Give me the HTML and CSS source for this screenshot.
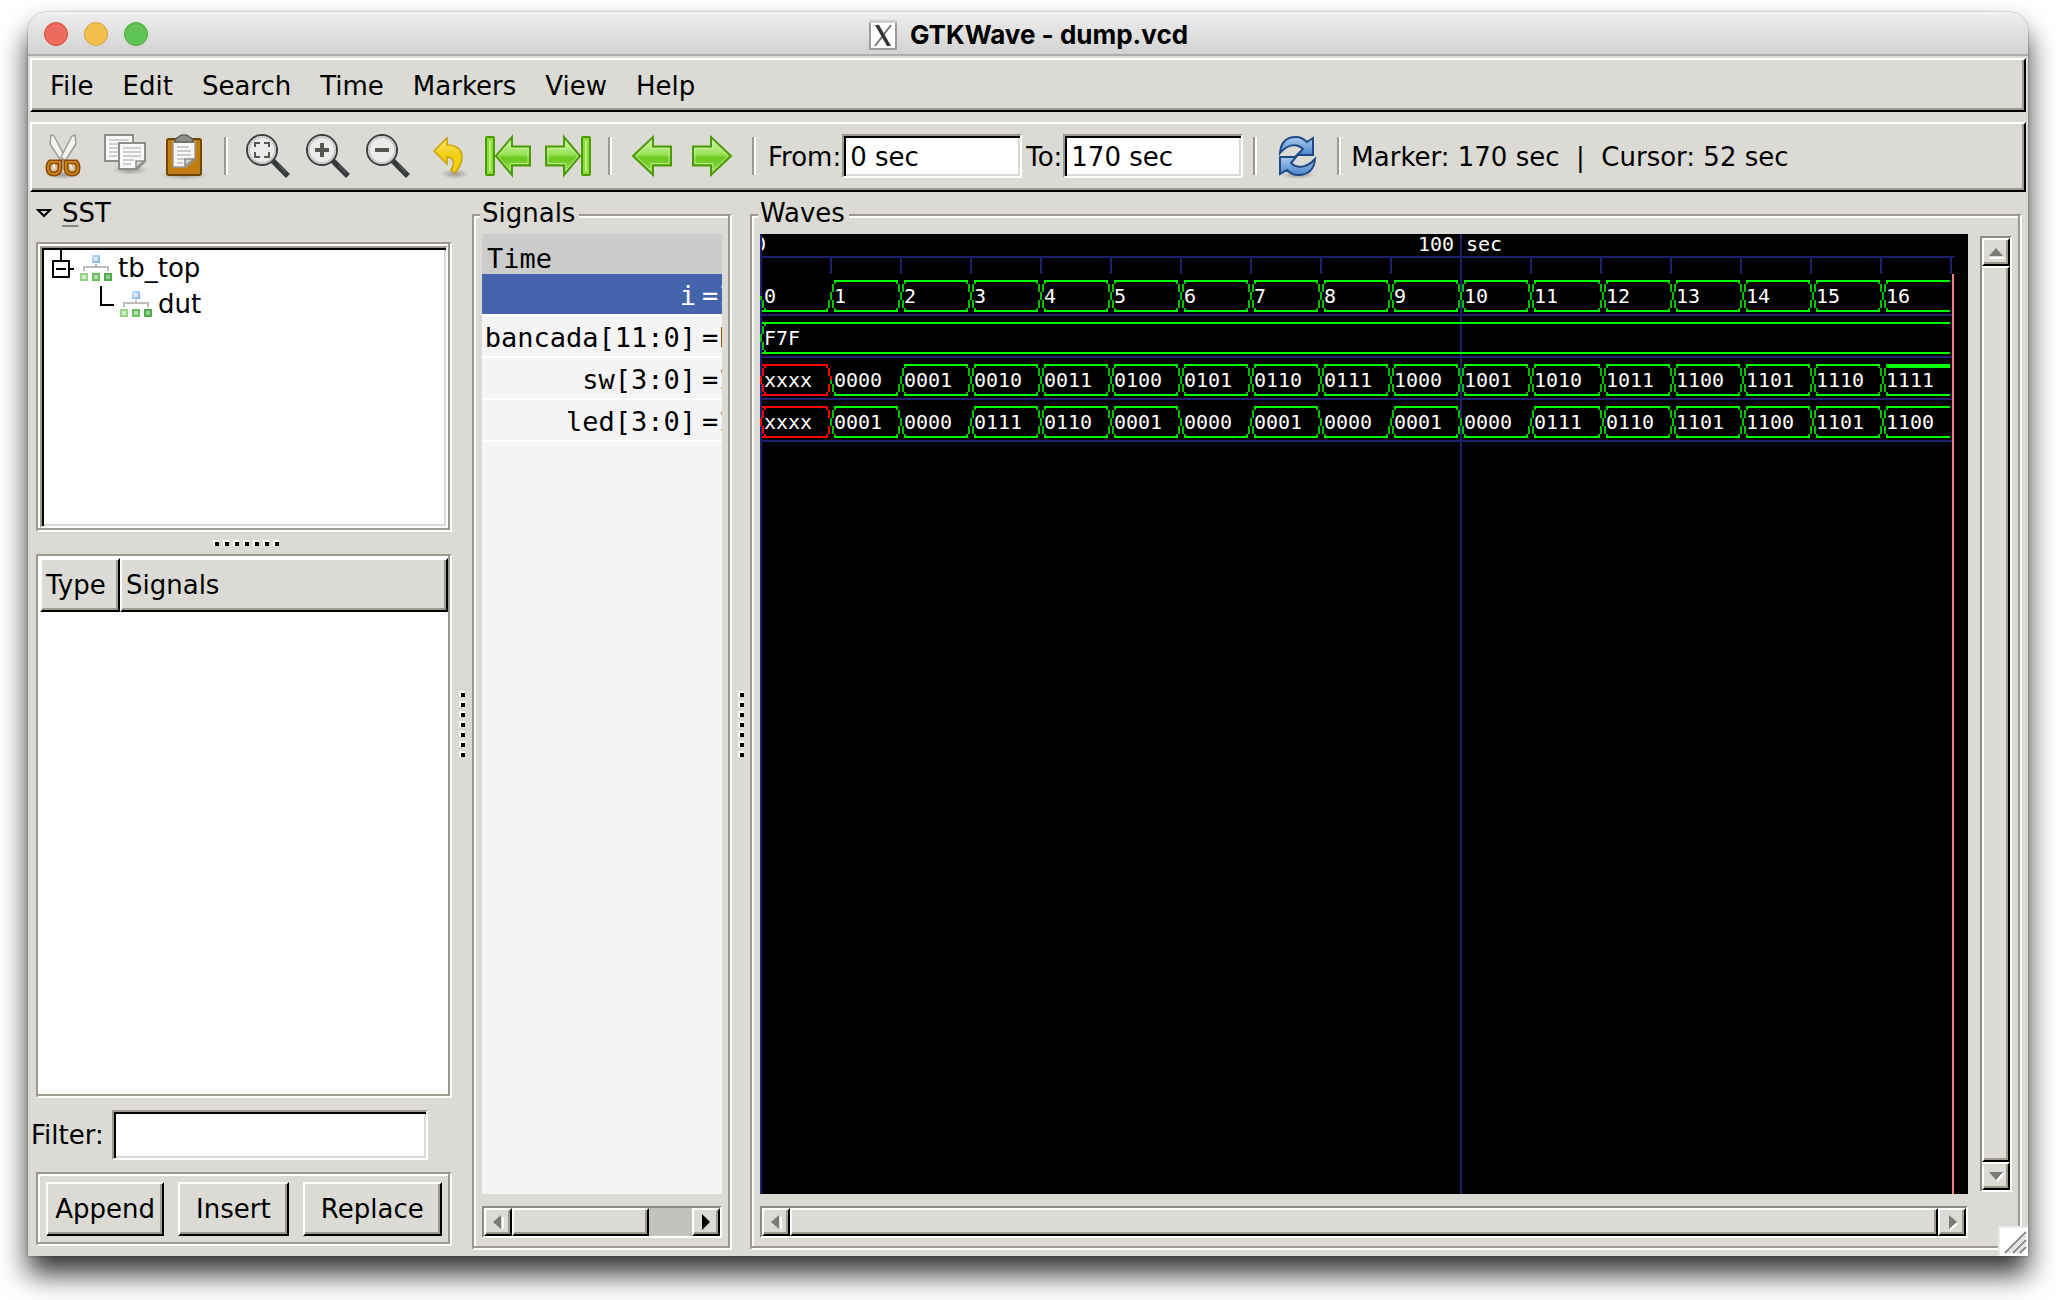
FILE: index.html
```html
<!DOCTYPE html>
<html lang="en">
<head>
<meta charset="utf-8">
<title>GTKWave - dump.vcd</title>
<link rel="stylesheet" href="styles.css">
</head>
<body>
<svg class="defs" aria-hidden="true">
  <defs>
    <linearGradient id="green" x1="0" y1="0" x2="0" y2="1">
      <stop offset="0" stop-color="#d6f7b4"/><stop offset=".45" stop-color="#9be35a"/><stop offset=".55" stop-color="#6cc820"/><stop offset="1" stop-color="#8fdc4c"/>
    </linearGradient>
    <linearGradient id="gold" x1="0" y1="0" x2="0" y2="1">
      <stop offset="0" stop-color="#fbe56a"/><stop offset=".5" stop-color="#f2cf15"/><stop offset="1" stop-color="#eed011"/>
    </linearGradient>
    <linearGradient id="blue" x1="0" y1="0" x2="0" y2="1">
      <stop offset="0" stop-color="#a9caf0"/><stop offset="1" stop-color="#4a86cc"/>
    </linearGradient>
    <radialGradient id="shade">
      <stop offset="0" stop-color="#000" stop-opacity=".3"/><stop offset="1" stop-color="#000" stop-opacity="0"/>
    </radialGradient>
    <linearGradient id="node" x1="0" y1="0" x2="1" y2="1">
      <stop offset="0" stop-color="#b8dcf8"/><stop offset="1" stop-color="#7fb4ea"/>
    </linearGradient>
    <symbol id="lens" viewBox="0 0 48 48">
      <path d="M30 30l12 12" stroke="#353b3d" stroke-width="5.500" stroke-linecap="square"/>
      <path d="M35 33l7 8" stroke="#6a7072" stroke-width="1"/>
      <circle cx="18" cy="18" r="15" fill="#ebebe9" stroke="#3a4042" stroke-width="2"/>
      <circle cx="18" cy="18" r="13" fill="none" stroke="#c9c9c6" stroke-width="2"/>
    </symbol>
    <symbol id="arrow" viewBox="0 0 48 48">
      <path d="M5 24L25 5v9.500h18v19H25V43z" fill="url(#green)" stroke="#4c9a08" stroke-width="2"/>
      <path d="M8 24L23 9.500v7h18v15H23v7z" fill="none" stroke="#c4f29a" stroke-width="1" opacity=".8"/>
    </symbol>
    <symbol id="edge-arrow" viewBox="0 0 50 48">
      <rect x="3" y="5" width="8" height="38" rx="1" fill="#86dd3c" stroke="#4c9a08" stroke-width="2"/>
      <path d="M7 8v32" stroke="#b5f07c" stroke-width="2"/>
      <path d="M13 24L29 5v9.500h18v19H29V43z" fill="url(#green)" stroke="#4c9a08" stroke-width="2"/>
      <path d="M15 24L27 9.500v7h18v15H27v7z" fill="none" stroke="#c4f29a" stroke-width="1" opacity=".8"/>
    </symbol>
    <symbol id="hierarchy" viewBox="0 0 32 26">
      <path d="M4 16v-4h24v4M16 9v3" fill="none" stroke="#bdbdbd" stroke-width="2"/>
      <rect x="13" y="1" width="6" height="6" fill="#dce6f8" stroke="url(#node)" stroke-width="2"/>
      <rect x="1" y="19" width="6" height="6" fill="#d0eecb" stroke="#93d486" stroke-width="2"/>
      <rect x="13" y="19" width="6" height="6" fill="#b5dfb0" stroke="#6cc05f" stroke-width="2"/>
      <rect x="25" y="19" width="6" height="6" fill="#93cf93" stroke="#4faa4b" stroke-width="2"/>
    </symbol>
  </defs>
</svg>

<div class="window">
  <header class="titlebar">
    <div class="lights">
      <button class="light red" aria-label="Close"></button>
      <button class="light amber" aria-label="Minimize"></button>
      <button class="light lime" aria-label="Zoom"></button>
    </div>
    <svg class="x-icon" viewBox="0 0 30 32" aria-hidden="true">
      <rect x="2" y="2" width="26" height="28" fill="#fff" stroke="#9c9c9c" stroke-width="2"/>
      <path d="M1 1h28v3H1z" fill="#cfcfcf"/>
      <path d="M23 6L7 27" stroke="#777" stroke-width="2"/>
      <path d="M7 6h4l12 21h-4z" fill="#333"/>
    </svg>
    <h1 class="title">GTKWave - dump.vcd</h1>
  </header>

  <nav class="menubar raised">
    <button class="menu">File</button>
    <button class="menu">Edit</button>
    <button class="menu">Search</button>
    <button class="menu">Time</button>
    <button class="menu">Markers</button>
    <button class="menu">View</button>
    <button class="menu">Help</button>
  </nav>

  <div class="toolbar raised">
    <button class="tool" aria-label="Cut"><svg viewBox="0 0 48 48">
      <ellipse cx="23" cy="43" rx="18" ry="4" fill="url(#shade)"/>
      <path d="M11 3L10 12l11 17 4-4L14 4z" fill="#f4f4f2" stroke="#9b9d98" stroke-width="1.500"/>
      <path d="M35 3l1 9-11 17-4-4L32 4z" fill="#f4f4f2" stroke="#9b9d98" stroke-width="1.500"/>
      <path d="M10 30h10v7q-1 5-6 5-6 0-6-6 0-4 2-6zM36 30H26v7q1 5 6 5 6 0 6-6 0-4-2-6z" fill="#d9bf95" stroke="#8a4b00" stroke-width="5"/>
      <path d="M10 30h10v7q-1 5-6 5-6 0-6-6 0-4 2-6zM36 30H26v7q1 5 6 5 6 0 6-6 0-4-2-6z" fill="none" stroke="#cc8018" stroke-width="2"/>
      <path d="M14 32v5M30 32l2 5" stroke="#eee" stroke-width="2"/>
    </svg></button>
    <button class="tool" aria-label="Copy"><svg viewBox="0 0 48 48">
      <ellipse cx="30" cy="38" rx="18" ry="5" fill="url(#shade)"/>
      <path d="M5 3h28v26H5z" fill="#f8f8f7" stroke="#8c8e8a" stroke-width="2"/>
      <path d="M9 8h20M9 12h16M9 16h12M9 20h14M9 24h8" stroke="#c0c1be" stroke-width="1.500"/>
      <path d="M19 11h26v18l-8 8H19z" fill="#f8f8f7" stroke="#8c8e8a" stroke-width="2"/>
      <path d="M23 16h18M23 20h18M23 24h18M23 28h11M23 32h8" stroke="#c0c1be" stroke-width="1.500"/>
      <path d="M36 36v-7h8z" fill="#d8d9d6" stroke="#8c8e8a" stroke-width="1.500"/>
    </svg></button>
    <button class="tool" aria-label="Paste"><svg viewBox="0 0 48 48">
      <ellipse cx="24" cy="43" rx="24" ry="5" fill="url(#shade)"/>
      <rect x="7" y="7" width="34" height="36" rx="2" fill="#c17d11" stroke="#6e4702" stroke-width="2"/>
      <path d="M13 10h22v17l-9 8H13z" fill="#f6f6f5" stroke="#9a9b97" stroke-width="1.500"/>
      <path d="M17 15h12M17 19h14M17 23h14M17 27h9M17 31h6" stroke="#bcbdb9" stroke-width="1.500"/>
      <path d="M25 34v-7h9z" fill="#d2d3cf" stroke="#888a85" stroke-width="1.500"/>
      <path d="M15 10q0-4 4-5 1-2 5-2t5 2q4 1 4 5z" fill="#8d8f89" stroke="#63655f" stroke-width="1.500"/>
    </svg></button>
    <span class="separator"></span>
    <button class="tool" aria-label="Zoom fit"><svg viewBox="0 0 48 48">
      <use href="#lens"/>
      <path d="M11 15v-4h5M20 11h5v4M25 20v5h-5M16 25h-5v-5" fill="none" stroke="#555753" stroke-width="2"/>
    </svg></button>
    <button class="tool" aria-label="Zoom in"><svg viewBox="0 0 48 48">
      <use href="#lens"/><path d="M11 18h14M18 11v14" stroke="#555753" stroke-width="4"/>
    </svg></button>
    <button class="tool" aria-label="Zoom out"><svg viewBox="0 0 48 48">
      <use href="#lens"/><path d="M11 18h14" stroke="#555753" stroke-width="4"/>
    </svg></button>
    <button class="tool" aria-label="Zoom undo"><svg viewBox="0 0 48 48">
      <ellipse cx="31" cy="42" rx="14" ry="5" fill="url(#shade)"/>
      <path d="M10 19L23 6v7c10 0 15 5 15 12 0 6-3 11-7 16l-4-3c4-6 3-13-4-13v7z" fill="url(#gold)" stroke="#c9a202" stroke-width="1.500"/>
    </svg></button>
    <button class="tool" aria-label="Zoom to start"><svg class="wide" viewBox="0 0 50 48"><use href="#edge-arrow"/></svg></button>
    <button class="tool" aria-label="Zoom to end"><svg class="wide flip" viewBox="0 0 50 48"><use href="#edge-arrow"/></svg></button>
    <span class="separator"></span>
    <button class="tool" aria-label="Previous edge"><svg viewBox="0 0 48 48"><use href="#arrow"/></svg></button>
    <button class="tool" aria-label="Next edge"><svg class="flip" viewBox="0 0 48 48"><use href="#arrow"/></svg></button>
    <span class="separator"></span>
    <label class="range" for="from">From:</label>
    <input class="field sunken time" id="from" type="text" value="0 sec">
    <label class="range" for="to">To:</label>
    <input class="field sunken time" id="to" type="text" value="170 sec">
    <span class="separator"></span>
    <button class="tool" aria-label="Reload"><svg viewBox="0 0 48 48">
      <ellipse cx="25" cy="43" rx="17" ry="4" fill="url(#shade)"/>
      <path d="M7 21C8 9 14 5 23 5c5 0 8 2 11 5l6-4v17H24l6-6c-6-6-15-5-23 4z" fill="url(#blue)" stroke="#204a87" stroke-width="2"/>
      <path d="M42 27c-1 12-8 16-17 16-5 0-8-2-11-5l-7 4V25h16l-5 6c6 6 16 5 24-4z" fill="url(#blue)" stroke="#204a87" stroke-width="2"/>
    </svg></button>
    <span class="separator"></span>
    <output class="status">Marker: 170 sec&nbsp; |&nbsp; Cursor: 52 sec</output>
  </div>

  <main class="panes">
    <section class="sst">
      <button class="expander"><svg viewBox="0 0 16 10" aria-hidden="true"><path d="M2 2h12L8 8z" fill="none" stroke="#000" stroke-width="2"/></svg><span><u>S</u>ST</span></button>
      <div class="etched tree-frame">
        <ul class="tree sunken">
          <li class="branch"><svg class="twig" viewBox="0 0 22 36" aria-hidden="true"><path d="M9 0v11M1 11h16v16H1zM4 19h10M17 19h5" fill="none" stroke="#000" stroke-width="2"/></svg><svg class="module" aria-hidden="true"><use href="#hierarchy"/></svg>tb_top</li>
          <li class="branch leaf"><svg class="twig" viewBox="0 0 22 36" aria-hidden="true"><path d="M9 0v19h13" fill="none" stroke="#000" stroke-width="2"/></svg><svg class="module" aria-hidden="true"><use href="#hierarchy"/></svg>dut</li>
        </ul>
      </div>
      <div class="grip across"><i></i><i></i><i></i><i></i><i></i><i></i><i></i></div>
      <div class="etched list-frame">
        <table class="facs">
          <thead><tr><th class="raised type">Type</th><th class="raised">Signals</th></tr></thead>
        </table>
      </div>
      <div class="filter">
        <label for="filter">Filter:</label>
        <input class="field sunken" id="filter" type="text">
      </div>
      <div class="etched actions">
        <button class="action raised append">Append</button>
        <button class="action raised insert">Insert</button>
        <button class="action raised replace">Replace</button>
      </div>
    </section>

    <div class="grip down"><i></i><i></i><i></i><i></i><i></i><i></i><i></i></div>

    <section class="etched group signals">
      <h2 class="legend">Signals</h2>
      <div class="names">
        <div class="time-head">Time</div>
        <div class="name selected"><span>i</span><b>=1</b></div>
        <div class="name"><span>bancada[11:0]</span><b>=F</b></div>
        <div class="name"><span>sw[3:0]</span><b>=1</b></div>
        <div class="name"><span>led[3:0]</span><b>=1</b></div>
      </div>
      <div class="scroll">
        <button class="raised step" aria-label="Scroll left"><svg viewBox="0 0 24 24"><path d="M16 6v14l2-2V8z" fill="#fff"/><path d="M15 5v14l-8-7z" fill="#7a7a78"/></svg></button>
        <div class="raised thumb part"></div>
        <button class="raised step end" aria-label="Scroll right"><svg viewBox="0 0 24 24"><path d="M8 4v16l8-8z"/></svg></button>
      </div>
    </section>

    <div class="grip down"><i></i><i></i><i></i><i></i><i></i><i></i><i></i></div>

    <section class="etched group waves">
      <h2 class="legend">Waves</h2>
      <div class="view">
        <svg class="plot" id="plot" role="img" aria-label="Waveforms"></svg>
        <div class="scroll upright">
          <button class="raised step" aria-label="Scroll up"><svg viewBox="0 0 24 24"><path d="M6 17h14v2H6z" fill="#fff"/><path d="M12 8l7 8H5z" fill="#7a7a78"/></svg></button>
          <div class="raised thumb"></div>
          <button class="raised step" aria-label="Scroll down"><svg viewBox="0 0 24 24"><path d="M7 9h14l-7 9z" fill="#fff"/><path d="M5 8h14l-7 8z" fill="#7a7a78"/></svg></button>
        </div>
      </div>
      <div class="scroll">
        <button class="raised step" aria-label="Scroll left"><svg viewBox="0 0 24 24"><path d="M16 6v14l2-2V8z" fill="#fff"/><path d="M15 5v14l-8-7z" fill="#7a7a78"/></svg></button>
        <div class="raised thumb"></div>
        <button class="raised step" aria-label="Scroll right"><svg viewBox="0 0 24 24"><path d="M10 7v14l8-7z" fill="#fff"/><path d="M9 5v14l8-7z" fill="#7a7a78"/></svg></button>
      </div>
    </section>
  </main>

  <svg class="resizer" viewBox="0 0 30 30" aria-hidden="true">
    <path d="M0 0h30v30H0z" fill="#e9e9e9"/><path d="M2 2h28v28H2z" fill="#fff"/>
    <path d="M7 27L28 6M15 27L28 14M22 27l6-6" stroke="#8a8a8a" stroke-width="2"/>
    <path d="M11 27L28 10M19 27l9-9" stroke="#dcdcdc" stroke-width="2"/>
  </svg>
</div>
<script src="waves.js"></script>
</body>
</html>
```
FILE: styles.css
```css
:root {
  --bg: #dbdad5;
  --dark: #9d998f;
  --grid: #202070;
}

* { box-sizing: border-box; }

html { height: 100%; }

body {
  margin: 0;
  min-height: 100%;
  display: flex;
  padding: 12px 28px 44px;
  background: #fff;
  color: #000;
  font: 26px/30px "DejaVu Sans", sans-serif;
  overflow: hidden;
}

button, input {
  font: inherit;
  color: inherit;
  margin: 0;
  padding: 0;
  border: 0;
  background: none;
  outline: none;
}

svg { display: block; }

.defs { position: absolute; width: 0; height: 0; }

.window {
  position: relative;
  flex: 1;
  min-width: 0;
  display: flex;
  flex-direction: column;
  background: var(--bg);
  border-radius: 20px 20px 0 0;
  box-shadow: 0 18px 28px rgba(0, 0, 0, .8), 0 0 2px rgba(0, 0, 0, .4);
}

/* Bevels */
.raised {
  background: var(--bg);
  border: 2px solid;
  border-color: #fff #000 #000 #fff;
  box-shadow: inset -2px -2px 0 var(--dark);
}

.sunken {
  background: #fff;
  border: 2px solid;
  border-color: var(--dark) #fff #fff var(--dark);
  box-shadow: inset 2px 2px 0 #000, inset -2px -2px 0 var(--bg);
}

.etched {
  border: 2px solid;
  border-color: var(--dark) #fff #fff var(--dark);
  box-shadow: inset -2px -2px 0 var(--dark), inset 2px 2px 0 #fff;
}

/* Title bar */
.titlebar {
  position: relative;
  display: flex;
  align-items: center;
  justify-content: center;
  gap: 12px;
  height: 44px;
  padding-top: 2px;
  background: linear-gradient(#ededed, #d2d2d2);
  border-top: 2px solid #f4f4f4;
  border-bottom: 2px solid #adadad;
  border-radius: 20px 20px 0 0;
}

.lights {
  position: absolute;
  left: 16px;
  top: 8px;
  display: flex;
  gap: 16px;
}

.light { width: 24px; height: 24px; border-radius: 50%; border: 1px solid; }
.red { background: #ec6a5e; border-color: #d5493f; }
.amber { background: #f4bf4f; border-color: #d8a136; }
.lime { background: #61c554; border-color: #4aa73c; }

.x-icon { width: 30px; height: 32px; }

.title {
  margin: 0;
  font: bold 26px/30px Inter, sans-serif;
}

/* Menus and tools */
.menubar {
  display: flex;
  gap: 1px;
  margin: 2px 2px 10px;
  height: 54px;
  padding: 2px 4px 0;
}

.menu { padding: 0 14px; }

.toolbar {
  display: flex;
  align-items: center;
  margin: 0 2px;
  height: 70px;
  padding: 0 2px 2px;
}

.tool {
  flex: none;
  width: 60px;
  height: 60px;
  display: flex;
  align-items: center;
  justify-content: center;
}

.tool svg { width: 48px; height: 48px; flex: none; }
.tool .wide { width: 50px; }
.flip { transform: scaleX(-1); }

.separator {
  flex: none;
  width: 4px;
  height: 38px;
  margin: 0 10px;
  border-left: 2px solid var(--dark);
  border-right: 2px solid #fff;
}

.range, .status { padding-top: 2px; }
.range { padding-left: 2px; padding-right: 1px; }
.field { padding: 2px 6px 0; min-width: 0; height: 44px; }
.time { width: 180px; }
.range + .field + .range { padding-left: 4px; }

/* Panes */
.panes {
  flex: 1;
  min-height: 0;
  display: grid;
  grid-template-columns: 424px 20px 260px 18px minmax(0, 1fr);
  padding-right: 6px;
}

.sst {
  display: flex;
  flex-direction: column;
  padding: 0 0 10px 8px;
}

.expander {
  display: flex;
  align-items: center;
  gap: 10px;
  height: 50px;
  padding-bottom: 8px;
}

.expander svg { width: 16px; height: 10px; }
.expander u { text-underline-offset: 3px; text-decoration-color: #888; }

.tree-frame { height: 290px; padding: 2px; }

.tree {
  height: 100%;
  margin: 0;
  padding: 2px;
  list-style: none;
}

.branch {
  display: flex;
  align-items: center;
  gap: 6px;
  height: 36px;
  padding-left: 8px;
}

.leaf { padding-left: 48px; }
.twig { width: 22px; height: 36px; }
.module { width: 32px; height: 26px; }

.grip { display: flex; align-items: center; justify-content: center; gap: 4px; }
.across { height: 22px; padding-left: 4px; }
.down { flex-direction: column; }

.grip i {
  width: 6px;
  height: 6px;
  background: #000;
  border: solid #fff;
  border-width: 2px 0 0 2px;
}

.list-frame { flex: 1; background: #fff; padding: 2px; }

.facs { width: 100%; border-collapse: separate; border-spacing: 0; }
.facs th { height: 54px; padding: 0 4px; font-weight: normal; text-align: left; }
.facs .type { width: 80px; }

.filter {
  display: flex;
  align-items: center;
  gap: 8px;
  margin: 12px 24px 12px -5px;
}

.filter .field { flex: 1; height: 50px; }

.actions { display: flex; gap: 14px; height: 74px; padding: 8px; }
.action { height: 54px; }
.append { flex: 118; }
.insert { flex: 110; }
.replace { flex: 140; }

.group {
  display: flex;
  flex-direction: column;
  min-width: 0;
  margin: 22px 0 6px;
  padding: 0 8px 10px;
}

.legend {
  align-self: flex-start;
  margin: -18px 0 6px -2px;
  padding: 0 4px 0 2px;
  background: var(--bg);
  font: inherit;
}

.names {
  flex: 1;
  overflow: hidden;
  background: #f4f4f4;
  font: 27px/30px "DejaVu Sans Mono", monospace;
}

.time-head { height: 40px; padding: 10px 5px 0; background: #ccc; }

.name {
  display: flex;
  gap: 6px;
  height: 42px;
  padding-top: 7px;
  border-bottom: 2px solid #fff;
}

.name span { flex: none; width: 214px; text-align: right; }
.name b { font-weight: normal; }
.selected { background: #4464ac; color: #fff; }

.view { flex: 1; min-height: 0; display: flex; gap: 12px; }

.plot { flex: 1; min-width: 0; height: 100%; background: #000; }

.plot text {
  fill: #fff;
  font: 20px "DejaVu Sans Mono", monospace;
}

.plot path { fill: none; stroke-width: 2; shape-rendering: crispEdges; }
.grid { stroke: var(--grid); }
.trace { stroke: #0f0; }
.edge { stroke: #00c000; }
.unknown { stroke: #f00; }
.marker { stroke: #ff8080; }
.plot .full { stroke-width: 4; }

/* Scroll bars */
.scroll {
  display: flex;
  height: 32px;
  margin-top: 12px;
  background: #c3c2bc;
  border: 2px solid;
  border-color: #8b8a84 #fff #fff #8b8a84;
}

.waves > .scroll { margin-right: 44px; }
.upright { flex-direction: column; width: 32px; height: auto; margin: 2px 0; }
.step { flex: none; width: 28px; height: 28px; }
.step svg { width: 24px; height: 24px; }
.thumb { flex: 1; }
.part { flex: none; width: 58%; }
.end { margin-left: auto; }

.resizer {
  position: absolute;
  right: 0;
  bottom: 0;
  width: 30px;
  height: 30px;
}
```
FILE: waves.js
```js
// Draws the time ruler and one lane per signal; each value lasts 10 sec.
const STEP = 70;
const LANE = 42;
const ZERO = /^0+$/;
const ONES = /^1{4}$/;

const binary = 'xxxx 0000 0001 0010 0011 0100 0101 0110 0111 1000 1001 1010 1011 1100 1101 1110 1111';
const lanes = [
  Array.from({ length: 17 }, (_, n) => String(n)),
  ['F7F'],
  binary.split(' '),
  'xxxx 0001 0000 0111 0110 0001 0000 0001 0000 0001 0000 0111 0110 1101 1100 1101 1100'.split(' '),
];

const plot = document.getElementById('plot');

function add(tag, attrs, text) {
  const node = document.createElementNS('http://www.w3.org/2000/svg', tag);
  for (const key in attrs) node.setAttribute(key, attrs[key]);
  if (text) node.textContent = text;
  plot.appendChild(node);
}

const line = (cls, d) => add('path', { class: cls, d });
const at = n => n * STEP + (n > 11 ? 3 : 1);
const end = 17 * STEP;

// Half of a bus transition: side is -1 (before) or 1 (after).
function half(cls, c, top, side, upper) {
  const y = upper ? [2, 4, 12] : [28, 20, 16];
  const len = [2, 8, 4];
  line(cls, [4, 2, 0].map((dx, i) => `M${c + side * dx} ${top + y[i]}v${len[i]}`).join(''));
}

add('text', { x: -6, y: 17 }, '0');
add('text', { x: 658, y: 17 }, '100');
add('text', { x: 706, y: 17 }, 'sec');
line('grid', `M0 23H${end + 4}`);
for (let n = 1; n <= 17; n++) line('grid', `M${n * STEP + 1} 24v16`);
line('grid', 'M1 0V4000M701 0V4000');

lanes.forEach((values, row) => {
  const top = 46 + row * LANE;
  line('grid', `M0 ${top + 35}H${end + 2}`);
  values.forEach((value, n) => {
    const last = n === values.length - 1;
    const from = at(n) + (n ? 3 : 1);
    const to = last ? end : at(n + 1) - 3;
    const bad = value[0] === 'x';
    const zero = ZERO.test(value);
    const cls = bad ? 'unknown' : 'trace';
    const edge = bad ? 'unknown' : 'edge';
    if (ONES.test(value)) line('trace full', `M${from} ${top + 2}H${to}`);
    else if (!zero) line(cls, `M${from} ${top + 1}H${to}`);
    line(cls, `M${from} ${top + 31}H${to}`);
    half(edge, at(n), top, 1, false);
    if (!zero) half(edge, at(n), top, 1, true);
    if (!last) {
      half(edge, at(n + 1), top, -1, false);
      if (!zero) half(edge, at(n + 1), top, -1, true);
    }
    add('text', { x: at(n) + 3, y: top + 23 }, value);
  });
});

line('marker', `M${end + 3} 40V4000`);
```
